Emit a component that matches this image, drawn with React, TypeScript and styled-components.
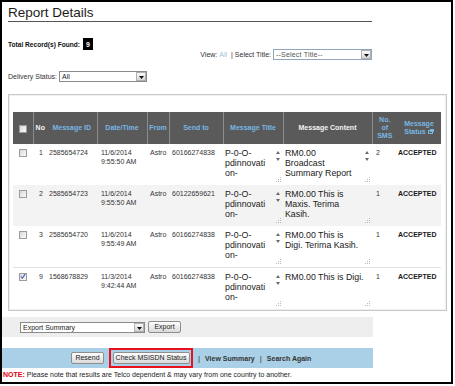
import * as React from 'react';
import styled, { createGlobalStyle } from 'styled-components';

const GlobalStyle = createGlobalStyle`
    body {
        margin: 0;
        background: #fff;
        font-family: "Liberation Sans", Arial, sans-serif;
        color: #333;
    }
`;

const Frame = styled.div`
    width: 453px;
    height: 384px;
    border: 2px solid #000;
    box-sizing: border-box;
    display: flex;
    flex-direction: column;
    overflow: hidden;
`;

const Title = styled.h1`
    margin: 2px 0 0 6px;
    width: 364px;
    font-size: 13.5px;
    font-weight: normal;
    line-height: 17px;
    color: #1a1a1a;
    border-bottom: 1px solid #555;
`;

const TotalRow = styled.div`
    margin: 16px 0 0 6px;
    display: flex;
    align-items: center;
    gap: 3px;
    font-size: 6.6px;
    font-weight: bold;
    color: #111;
`;

const CountBox = styled.span`
    width: 10px;
    height: 12px;
    background: #000;
    color: #fff;
    font-size: 7px;
    display: flex;
    align-items: center;
    justify-content: center;
`;

const FilterRow = styled.div<{ $align?: string; $top: number }>`
    margin: ${p => p.$top}px 0 0 6px;
    width: 364px;
    display: flex;
    justify-content: ${p => p.$align || 'flex-start'};
    align-items: center;
    gap: 2px;
    font-size: 7px;
    color: #333;
`;

const LinkText = styled.span`
    color: #9dc3dc;
`;

const SelectBox = styled.div<{ $width: number; $border?: string }>`
    width: ${p => p.$width}px;
    height: 11px;
    box-sizing: border-box;
    border: 1px solid ${p => p.$border || '#8a8a8a'};
    background: #fff;
    display: flex;
    align-items: center;
    justify-content: space-between;
    padding-left: 2px;
    font-size: 7px;
    color: #222;
`;

const SelectText = styled.span<{ $muted?: boolean }>`
    color: ${p => (p.$muted ? '#555' : '#222')};
    letter-spacing: ${p => (p.$muted ? '0.2px' : '0')};
`;

const DropButton = styled.span`
    width: 10px;
    height: 9px;
    box-sizing: border-box;
    border: 1px solid #b0b0b0;
    background: linear-gradient(#fafafa, #d6d6d6);
    display: flex;
    align-items: flex-end;
    justify-content: center;
    padding-bottom: 1px;
`;

const Panel = styled.div`
    margin: 12px 0 0 6px;
    width: 439px;
    height: 217px;
    box-sizing: border-box;
    border: 1px solid #c9c9c9;
    box-shadow: inset 0 0 0 1px #f0f0f0;
    padding: 17px 4px 0 4px;
`;

const Table = styled.table`
    width: 428px;
    border-collapse: collapse;
    table-layout: fixed;
`;

const HeadCell = styled.th<{ $link?: boolean; $divider?: boolean }>`
    height: 32px;
    padding: 0 1px;
    background: #5a5a5a;
    color: ${p => (p.$link ? '#78b6e4' : '#f4f4f4')};
    font-size: 7px;
    font-weight: bold;
    line-height: 8px;
    text-align: center;
    vertical-align: middle;
    border-left: ${p => (p.$divider ? '1px solid #8c8c8c' : 'none')};
`;

const Row = styled.tr<{ $shade?: boolean; $rule?: boolean }>`
    height: 41px;
    background: ${p => (p.$shade ? '#f3f3f3' : '#fff')};
    border-top: ${p => (p.$rule ? '1px solid #e2e2e2' : 'none')};
`;

const Cell = styled.td<{ $pad?: number; $bold?: boolean }>`
    padding: 4px 0 0 ${p => (p.$pad === undefined ? 3 : p.$pad)}px;
    vertical-align: top;
    text-align: left;
    font-size: 7px;
    line-height: 9px;
    font-weight: ${p => (p.$bold ? 'bold' : 'normal')};
    color: ${p => (p.$bold ? '#1a1a1a' : '#333')};
    white-space: nowrap;
    overflow: hidden;
`;

const AreaCell = styled.td`
    padding: 2px 1px 0 1px;
    vertical-align: top;
`;

const TextArea = styled.div`
    height: 37px;
    display: flex;
    position: relative;
`;

const AreaText = styled.div`
    flex: 1;
    padding: 2px 0 0 1px;
    font-size: 8.8px;
    line-height: 10px;
    color: #1a1a1a;
    white-space: nowrap;
    overflow: hidden;
`;

const ScrollCol = styled.div`
    width: 9px;
    display: flex;
    flex-direction: column;
    align-items: center;
    gap: 4px;
    padding-top: 5px;
`;

const Grip = styled.svg`
    position: absolute;
    right: 1px;
    bottom: 1px;
`;

const BoxWrap = styled.div`
    display: flex;
    justify-content: center;
    padding-top: 1px;
`;

const Check = styled.span`
    width: 8px;
    height: 8px;
    box-sizing: border-box;
    border: 1px solid #9c9c9c;
    background: linear-gradient(135deg, #d8d8d8, #fbfbfb);
    display: flex;
    align-items: center;
    justify-content: center;
`;

const ExportBar = styled.div`
    margin-top: 6px;
    width: 371px;
    height: 20px;
    background: #eeeeee;
    display: flex;
    align-items: center;
    gap: 3px;
    padding-left: 18px;
    box-sizing: border-box;
`;

const Button = styled.button<{ $width: number }>`
    width: ${p => p.$width}px;
    height: 12px;
    padding: 0;
    border: 1px solid #8e8e8e;
    border-radius: 2px;
    background: linear-gradient(#fdfdfd, #dadada);
    font-family: "Liberation Sans", Arial, sans-serif;
    font-size: 7px;
    color: #222;
    line-height: 10px;
`;

const ActionBar = styled.div`
    margin-top: 11px;
    width: 371px;
    height: 20px;
    background: #a9d0e6;
    display: flex;
    align-items: center;
    padding-left: 69px;
    box-sizing: border-box;
`;

const Highlight = styled.span`
    margin-left: 5px;
    width: 84px;
    height: 20px;
    box-sizing: border-box;
    border: 2px solid #e8101c;
    display: flex;
    align-items: center;
    justify-content: center;
`;

const NavLink = styled.span`
    font-size: 7px;
    font-weight: bold;
    color: #333;
`;

const Sep = styled.span`
    margin: 0 5px;
    font-size: 8px;
    color: #333;
`;

const Note = styled.div`
    margin: 3px 0 0 1px;
    font-size: 7px;
    color: #222;
`;

const NoteLabel = styled.b`
    color: #e3000f;
`;

const Arrow = ({ up }: { up?: boolean }) => (
    <svg width="4" height="3" viewBox="0 0 4 3">
        <path d={up ? 'M2 0 L4 3 L0 3 Z' : 'M0 0 L4 0 L2 3 Z'} fill="#6a6a6a" />
    </svg>
);

const DropArrow = () => (
    <svg width="5" height="3" viewBox="0 0 5 3">
        <path d="M0 0 H5 L2.5 3 Z" fill="#111" />
    </svg>
);

const Box = ({ checked }: { checked?: boolean }) => (
    <Check>
        {checked && (
            <svg width="7" height="7" viewBox="0 0 7 7">
                <path d="M1 3.6 L2.8 5.5 L6 0.8" stroke="#3d62c4" strokeWidth="1.3" fill="none" />
            </svg>
        )}
    </Check>
);

const Area = ({ lines, scroll }: { lines: string[]; scroll: boolean }) => (
    <TextArea>
        <AreaText>
            {lines.map((l, i) => (
                <div key={i}>{l}</div>
            ))}
        </AreaText>
        {scroll && (
            <ScrollCol>
                <Arrow up />
                <Arrow />
            </ScrollCol>
        )}
        <Grip width="5" height="5" viewBox="0 0 5 5">
            <rect x="4" y="0" width="1" height="1" fill="#bbb" />
            <rect x="2" y="2" width="1" height="1" fill="#bbb" />
            <rect x="4" y="2" width="1" height="1" fill="#bbb" />
            <rect x="0" y="4" width="1" height="1" fill="#bbb" />
            <rect x="2" y="4" width="1" height="1" fill="#bbb" />
            <rect x="4" y="4" width="1" height="1" fill="#bbb" />
        </Grip>
    </TextArea>
);

const titleLines = ['P-0-O-', 'pdinnovati', 'on-'];

const rows = [
    { no: '1', id: '2585654724', date: '11/6/2014', time: '9:55:50 AM', to: '60166274838', content: ['RM0.00', 'Broadcast', 'Summary Report'], scroll: true, sms: '2' },
    { no: '2', id: '2585654723', date: '11/6/2014', time: '9:55:50 AM', to: '60122659621', content: ['RM0.00 This is', 'Maxis. Terima', 'Kasih.'], scroll: false, sms: '1' },
    { no: '3', id: '2585654720', date: '11/6/2014', time: '9:55:49 AM', to: '60166274838', content: ['RM0.00 This is', 'Digi. Terima Kasih.'], scroll: false, sms: '1' },
    { no: '9', id: '1568678829', date: '11/3/2014', time: '9:42:44 AM', to: '60166274838', content: ['RM0.00 This is Digi.'], scroll: false, sms: '1', checked: true },
];

const widths = [20, 14, 50, 50, 22, 54, 60, 89, 25, 44];

export default function App() {
    return (
        <>
            <GlobalStyle />
            <Frame>
                <Title>Report Details</Title>
                <TotalRow>
                    Total Record(s) Found: <CountBox>9</CountBox>
                </TotalRow>
                <FilterRow $top={-1} $align="flex-end">
                    <span>View:</span>
                    <LinkText>All</LinkText>
                    <span>&nbsp;| Select Title:</span>
                    <SelectBox $width={99} $border="#8fa6bd">
                        <SelectText $muted>--Select Title--</SelectText>
                        <DropButton>
                            <DropArrow />
                        </DropButton>
                    </SelectBox>
                </FilterRow>
                <FilterRow $top={11}>
                    <span>Delivery Status:</span>
                    <SelectBox $width={88}>
                        <SelectText>All</SelectText>
                        <DropButton>
                            <DropArrow />
                        </DropButton>
                    </SelectBox>
                </FilterRow>
                <Panel>
                    <Table>
                        <colgroup>
                            {widths.map((w, i) => (
                                <col key={i} style={{ width: w }} />
                            ))}
                        </colgroup>
                        <thead>
                            <tr>
                                <HeadCell>
                                    <BoxWrap>
                                        <Box />
                                    </BoxWrap>
                                </HeadCell>
                                <HeadCell $divider>No</HeadCell>
                                <HeadCell $link>Message ID</HeadCell>
                                <HeadCell $link $divider>Date/Time</HeadCell>
                                <HeadCell $link $divider>From</HeadCell>
                                <HeadCell $link $divider>Send to</HeadCell>
                                <HeadCell $link $divider>Message Title</HeadCell>
                                <HeadCell $divider>Message Content</HeadCell>
                                <HeadCell $link $divider>
                                    No.
                                    <br />
                                    of
                                    <br />
                                    SMS
                                </HeadCell>
                                <HeadCell $link>
                                    Message
                                    <br />
                                    Status{' '}
                                    <svg width="6" height="5" viewBox="0 0 6 5">
                                        <rect x="0.5" y="1.5" width="4" height="3" fill="none" stroke="#78b6e4" />
                                        <rect x="2" y="0" width="4" height="3" fill="#78b6e4" />
                                    </svg>
                                </HeadCell>
                            </tr>
                        </thead>
                        <tbody>
                            {rows.map((r, i) => (
                                <Row key={r.id} $shade={i === 1} $rule={i === 3}>
                                    <Cell $pad={0}>
                                        <BoxWrap>
                                            <Box checked={r.checked} />
                                        </BoxWrap>
                                    </Cell>
                                    <Cell $pad={6}>{r.no}</Cell>
                                    <Cell $pad={2}>{r.id}</Cell>
                                    <Cell $pad={4}>
                                        {r.date}
                                        <br />
                                        {r.time}
                                    </Cell>
                                    <Cell>Astro</Cell>
                                    <Cell>{r.to}</Cell>
                                    <AreaCell>
                                        <Area lines={titleLines} scroll />
                                    </AreaCell>
                                    <AreaCell>
                                        <Area lines={r.content} scroll={r.scroll} />
                                    </AreaCell>
                                    <Cell $pad={4}>{r.sms}</Cell>
                                    <Cell $pad={1} $bold>
                                        ACCEPTED
                                    </Cell>
                                </Row>
                            ))}
                        </tbody>
                    </Table>
                </Panel>
                <ExportBar>
                    <SelectBox $width={125}>
                        <SelectText>Export Summary</SelectText>
                        <DropButton>
                            <DropArrow />
                        </DropButton>
                    </SelectBox>
                    <Button $width={33}>Export</Button>
                </ExportBar>
                <ActionBar>
                    <Button $width={33}>Resend</Button>
                    <Highlight>
                        <Button $width={77}>Check MSISDN Status</Button>
                    </Highlight>
                    <Sep>|</Sep>
                    <NavLink>View Summary</NavLink>
                    <Sep>|</Sep>
                    <NavLink>Search Again</NavLink>
                </ActionBar>
                <Note>
                    <NoteLabel>NOTE:</NoteLabel> Please note that results are Telco dependent &amp; may vary from one country to another.
                </Note>
            </Frame>
        </>
    );
}
